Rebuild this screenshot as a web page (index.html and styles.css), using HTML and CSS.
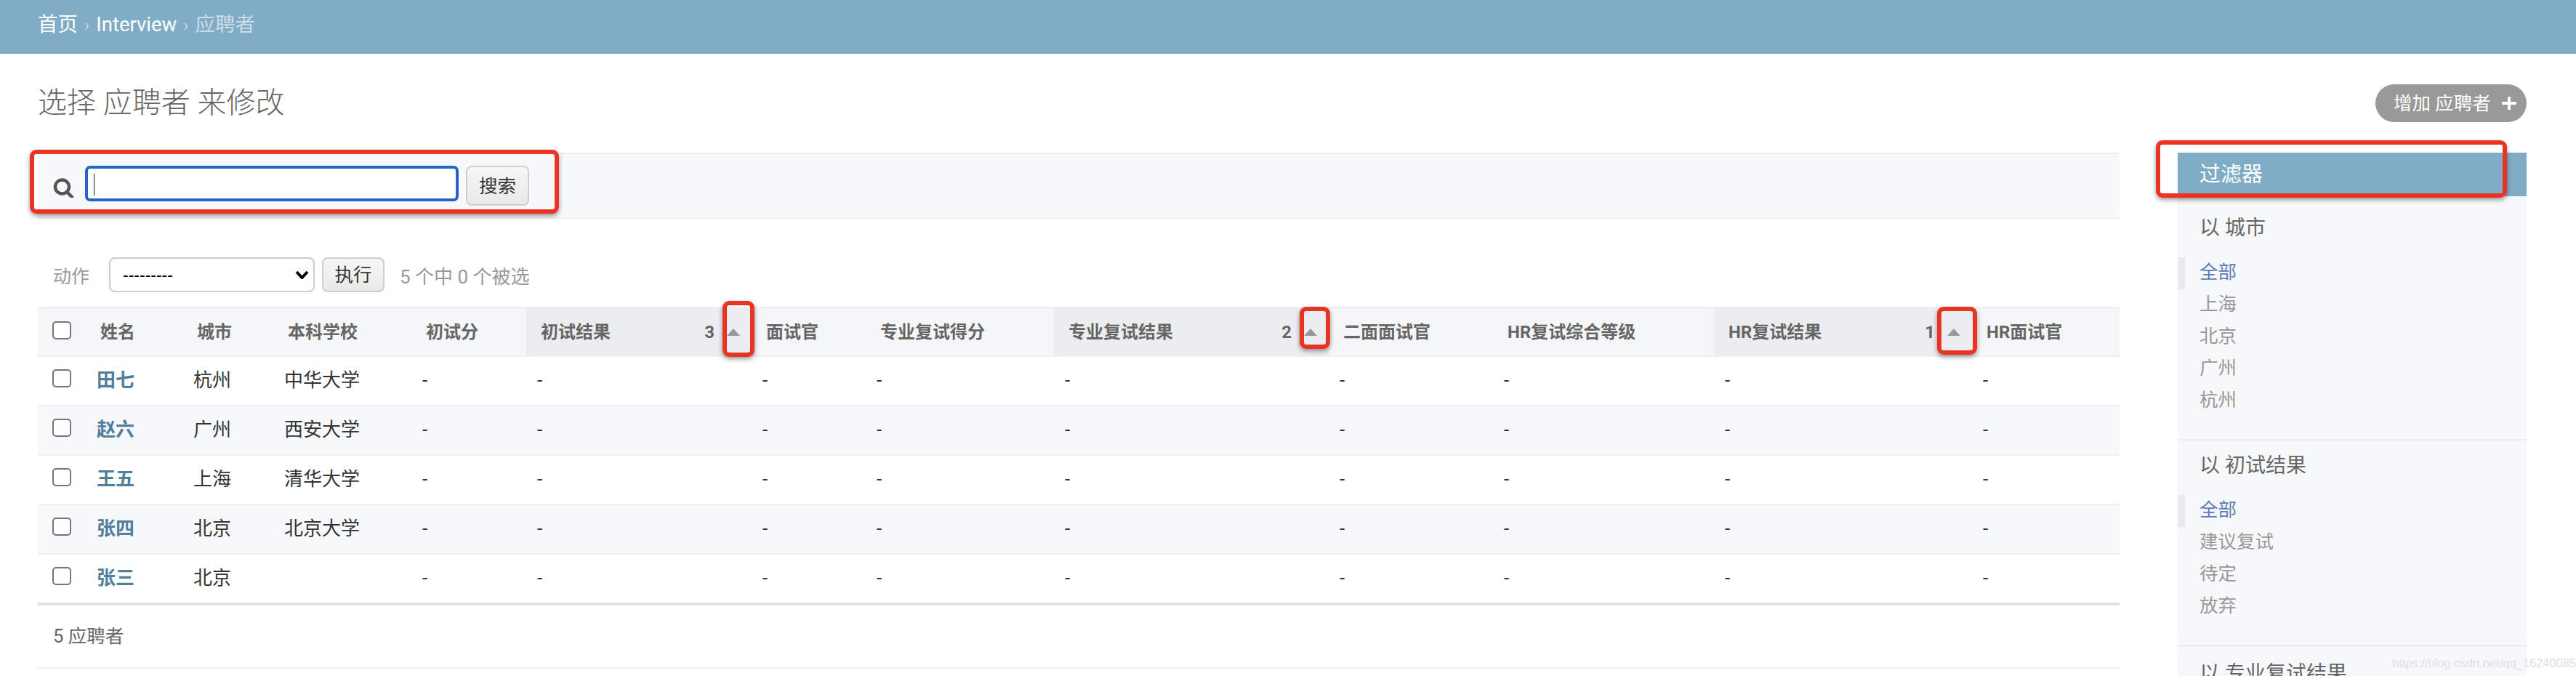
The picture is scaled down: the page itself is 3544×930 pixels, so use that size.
FILE: index.html
```html
<!DOCTYPE html>
<html lang="zh-CN">
<head>
<meta charset="utf-8">
<title>选择 应聘者 来修改</title>
<link rel="stylesheet" href="styles.css">
</head>
<body>
<div class="page">
  <header class="breadcrumbs">
    <a href="#">首页</a><span class="sep">›</span><a href="#">Interview</a><span class="sep">›</span><span class="current">应聘者</span>
  </header>
  <main class="content">
    <div class="title-row">
      <h1>选择 应聘者 来修改</h1>
      <a class="add-btn" href="#">增加 应聘者
        <svg class="plus" viewBox="0 0 20 18"><path d="M8 0h4v7h8v4h-8v7H8v-7H0V7h8z"/></svg>
      </a>
    </div>
    <div class="columns">
      <div class="changelist">
        <div class="toolbar">
          <svg class="search-icon" viewBox="0 0 29 27"><circle cx="12.5" cy="12" r="9.5"/><path d="M19 19l7 7"/></svg>
          <span class="search-input"><span class="caret"></span></span>
          <button class="btn search-btn" type="button">搜索</button>
        </div>
        <div class="actions">
          <span class="actions-label">动作</span>
          <span class="select-wrap">
            <select class="action-select"><option>---------</option></select>
            <svg class="chevron" viewBox="0 0 19 12"><path d="M2 2l7.5 8L17 2"/></svg>
          </span>
          <button class="btn go-btn" type="button">执行</button>
          <span class="counter">5 个中 0 个被选</span>
        </div>
        <table class="results">
          <colgroup>
            <col class="c-check"><col class="c-name"><col class="c-city"><col class="c-school"><col class="c-score">
            <col class="c-result"><col class="c-int"><col class="c-score2"><col class="c-result2"><col class="c-int2">
            <col class="c-level"><col class="c-result3"><col class="c-int3">
          </colgroup>
          <thead>
            <tr>
              <th><input class="check" type="checkbox"></th>
              <th>姓名</th><th>城市</th><th>本科学校</th><th>初试分</th>
              <th class="sorted"><div class="sort-cell"><span>初试结果</span><span class="sort-tools"><span>3</span><i class="arrow"></i></span></div></th>
              <th>面试官</th><th>专业复试得分</th>
              <th class="sorted"><div class="sort-cell"><span>专业复试结果</span><span class="sort-tools"><span>2</span><i class="arrow"></i></span></div></th>
              <th>二面面试官</th><th>HR复试综合等级</th>
              <th class="sorted"><div class="sort-cell"><span>HR复试结果</span><span class="sort-tools"><span>1</span><i class="arrow"></i></span></div></th>
              <th>HR面试官</th>
            </tr>
          </thead>
          <tbody>
            <tr><td><input class="check" type="checkbox"></td><td><a href="#">田七</a></td><td>杭州</td><td>中华大学</td><td>-</td><td>-</td><td>-</td><td>-</td><td>-</td><td>-</td><td>-</td><td>-</td><td>-</td></tr>
            <tr><td><input class="check" type="checkbox"></td><td><a href="#">赵六</a></td><td>广州</td><td>西安大学</td><td>-</td><td>-</td><td>-</td><td>-</td><td>-</td><td>-</td><td>-</td><td>-</td><td>-</td></tr>
            <tr><td><input class="check" type="checkbox"></td><td><a href="#">王五</a></td><td>上海</td><td>清华大学</td><td>-</td><td>-</td><td>-</td><td>-</td><td>-</td><td>-</td><td>-</td><td>-</td><td>-</td></tr>
            <tr><td><input class="check" type="checkbox"></td><td><a href="#">张四</a></td><td>北京</td><td>北京大学</td><td>-</td><td>-</td><td>-</td><td>-</td><td>-</td><td>-</td><td>-</td><td>-</td><td>-</td></tr>
            <tr><td><input class="check" type="checkbox"></td><td><a href="#">张三</a></td><td>北京</td><td></td><td>-</td><td>-</td><td>-</td><td>-</td><td>-</td><td>-</td><td>-</td><td>-</td><td>-</td></tr>
          </tbody>
        </table>
        <div class="paginator">5 应聘者</div>
      </div>
      <aside class="filter">
        <h2 class="filter-title">过滤器</h2>
        <section class="filter-group">
          <h3>以 城市</h3>
          <ul>
            <li class="selected"><a href="#">全部</a></li>
            <li><a href="#">上海</a></li>
            <li><a href="#">北京</a></li>
            <li><a href="#">广州</a></li>
            <li><a href="#">杭州</a></li>
          </ul>
        </section>
        <section class="filter-group">
          <h3>以 初试结果</h3>
          <ul>
            <li class="selected"><a href="#">全部</a></li>
            <li><a href="#">建议复试</a></li>
            <li><a href="#">待定</a></li>
            <li><a href="#">放弃</a></li>
          </ul>
        </section>
        <section class="filter-group filter-group-last">
          <h3>以 专业复试结果</h3>
        </section>
      </aside>
    </div>
  </main>
  <div class="mark mark-search"></div>
  <div class="mark mark-sort1"></div>
  <div class="mark mark-sort2"></div>
  <div class="mark mark-sort3"></div>
  <div class="mark mark-filter"></div>
  <div class="watermark">https://blog.csdn.net/qq_16240085</div>
</div>
</body>
</html>
```
FILE: styles.css
```css
* { box-sizing: border-box; }
html, body { margin: 0; padding: 0; background: #fff; }
body {
  font-family: Roboto, "Noto Sans CJK SC", sans-serif;
  color: #333;
  font-size: 26px;
}
.page { position: relative; height: 930px; overflow: hidden; }
a { text-decoration: none; color: inherit; }

.breadcrumbs {
  height: 74px;
  padding: 0 52px;
  background: #81acc6;
  color: #fff;
  font-size: 27.5px;
  line-height: 67px;
}
.breadcrumbs .sep { margin: 0 9px; color: #c4d8e4; font-size: 24px; }
.breadcrumbs .current { color: #c9dce7; }

.content { padding: 42px 68px 0 52px; }
.title-row { display: flex; justify-content: space-between; align-items: center; height: 52px; }
h1 { margin: 0; font-size: 40px; font-weight: 300; line-height: 50px; color: #666; }
.add-btn {
  display: flex;
  align-items: center;
  height: 52px;
  width: 208px;
  padding-left: 25px;
  border-radius: 26px;
  background: #999;
  color: #fff;
  font-size: 25.5px;
  line-height: 50px;
}
.plus { width: 20px; height: 18px; margin-left: 15px; fill: #fff; }

.columns { display: flex; justify-content: space-between; margin-top: 42px; }
.changelist { width: 2864px; }

.toolbar {
  display: flex;
  align-items: flex-start;
  height: 91px;
  padding: 16px 0 0 21px;
  background: #f7f8f9;
  border-top: 2px solid #eeeff0;
  border-bottom: 2px solid #eeeff0;
}
.search-icon { width: 29px; height: 27px; margin-top: 17px; fill: none; stroke: #555; stroke-width: 4.5; stroke-linecap: round; }
.search-input {
  display: block;
  width: 514px;
  height: 49px;
  margin-left: 15px;
  padding: 7px 0 0 8px;
  background: #fff;
  border: 4px solid #2463c8;
  border-radius: 7px;
}
.caret { display: block; width: 1px; height: 30px; background: #222; }
.btn {
  padding: 0;
  background: linear-gradient(#f6f6f6, #e9e9ea);
  border: 2px solid #cfcfcf;
  border-radius: 8px;
  color: #333;
  font-family: inherit;
  font-size: 25.5px;
  line-height: 30px;
}
.search-btn { width: 87px; height: 55px; margin-left: 10px; }

.actions { display: flex; align-items: center; height: 48px; margin-top: 53px; padding-left: 21px; }
.actions-label { width: 77px; font-size: 25px; color: #999; }
.select-wrap { position: relative; display: block; width: 283px; height: 48px; }
.action-select {
  display: block;
  width: 100%;
  height: 100%;
  padding: 0 0 0 17px;
  appearance: none;
  background: #fff;
  border: 2px solid #ccc;
  border-radius: 8px;
  color: #000;
  font-family: "Liberation Sans", sans-serif;
  font-size: 23px;
}
.chevron {
  position: absolute;
  top: 18px;
  right: 8px;
  width: 19px;
  height: 12px;
  fill: none;
  stroke: #000;
  stroke-width: 4;
}
.go-btn { width: 86px; height: 48px; margin-left: 10px; }
.counter { margin-left: 21px; font-size: 26px; color: #999; }

.results { width: 2864px; margin-top: 20px; table-layout: fixed; border-collapse: separate; border-spacing: 0; }
.c-check { width: 66px; }
.c-name { width: 133px; }
.c-city { width: 125px; }
.c-school { width: 190px; }
.c-score { width: 158px; }
.c-result { width: 310px; }
.c-int { width: 157px; }
.c-score2 { width: 259px; }
.c-result2 { width: 378px; }
.c-int2 { width: 226px; }
.c-level { width: 304px; }
.c-result3 { width: 355px; }
.c-int3 { width: 203px; }

th, td { vertical-align: top; text-align: left; line-height: 32px; overflow: hidden; white-space: nowrap; }
th {
  height: 69px;
  padding: 17px 16px 0 20px;
  background: #f5f6f7;
  border-top: 2px solid #eeeff0;
  border-bottom: 2px solid #eeeff0;
  color: #666;
  font-size: 24px;
  font-weight: 700;
}
th.sorted { background: #ecedef; }
.sort-cell { display: flex; justify-content: space-between; align-items: center; }
.sort-tools { display: flex; align-items: center; gap: 17px; }
.arrow { display: block; width: 0; height: 0; border-left: 9px solid transparent; border-right: 9px solid transparent; border-bottom: 10px solid #999; }
td {
  height: 68px;
  padding: 16px 16px 0 15px;
  border-bottom: 2px solid #eeeff0;
  font-size: 26px;
}
td:first-child, th:first-child { padding-left: 20px; padding-right: 0; }
td a { color: #4f7f9c; font-weight: 700; }
tbody tr:nth-child(even) td { background: #f7f8fa; }
tbody tr:last-child td { height: 70px; border-bottom: 4px solid #e0e2e3; }
.check {
  display: block;
  width: 26px;
  height: 25px;
  margin: 1px 0 0;
  appearance: none;
  background: #fff;
  border: 2px solid #767676;
  border-radius: 5px;
}

.paginator {
  height: 87px;
  padding-left: 21px;
  border-bottom: 2px solid #eeeff0;
  color: #666;
  font-size: 25.5px;
  line-height: 84px;
}

.filter { width: 480px; background: #f7f8fa; }
.filter-title {
  height: 60px;
  margin: 0 0 9px;
  padding-left: 30px;
  background: #81acc6;
  color: #fff;
  font-size: 29px;
  font-weight: 400;
  line-height: 60px;
}
.filter-group { padding: 15px 0 30px; border-bottom: 2px solid #eaebed; }
.filter-group-last { padding-top: 18px; }
.filter-group h3 {
  margin: 0 0 20px 30px;
  color: #666;
  font-size: 28px;
  font-weight: 400;
  line-height: 40px;
}
.filter-group ul { margin: 0; padding: 0; list-style: none; }
.filter-group li { height: 44px; padding-left: 30px; color: #999; font-size: 25.5px; line-height: 40px; }
.filter-group li.selected { padding-left: 20px; border-left: 10px solid #e8e9ea; color: #5b80b2; }

.mark {
  position: absolute;
  border: 6px solid #e93323;
  border-radius: 9px;
  box-shadow: 0 3px 6px rgba(0, 0, 0, .4);
}
.mark-search { left: 41px; top: 206px; width: 728px; height: 88px; }
.mark-sort1 { left: 994px; top: 414px; width: 44px; height: 77px; }
.mark-sort2 { left: 1788px; top: 422px; width: 42px; height: 58px; }
.mark-sort3 { left: 2665px; top: 422px; width: 55px; height: 66px; }
.mark-filter { left: 2966px; top: 193px; width: 483px; height: 79px; }

.watermark {
  position: absolute;
  left: 3291px;
  top: 902px;
  color: #dfe0e2;
  font-family: "Liberation Sans", sans-serif;
  font-size: 16.5px;
  line-height: 20px;
}
```
